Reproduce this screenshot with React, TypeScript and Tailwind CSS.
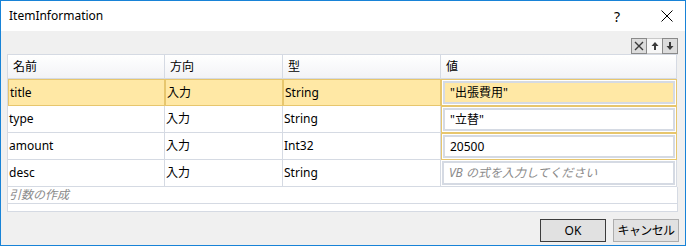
import React from "react";

const font = {
  fontFamily: '"Noto Sans", "Noto Sans CJK JP", sans-serif',
};

type Row = {
  name: string;
  dir: string;
  type: string;
  value: string;
  placeholder?: boolean;
  selected?: boolean;
  filled?: boolean;
};

const rows: Row[] = [
  { name: "title", dir: "入力", type: "String", value: "\"出張費用\"", selected: true, filled: true },
  { name: "type", dir: "入力", type: "String", value: "\"立替\"", filled: true },
  { name: "amount", dir: "入力", type: "Int32", value: "20500", filled: true },
  { name: "desc", dir: "入力", type: "String", value: "VB の式を入力してください", placeholder: true },
];

function ToolButtons() {
  return (
    <div className="flex justify-end pr-[1px]">
      <div className="w-[16px] h-[16px] border border-[#8a8a8a] bg-[#dcdcdc] flex items-center justify-center">
        <svg width="10" height="10" viewBox="0 0 10 10">
          <path d="M1 1 L9 9 M9 1 L1 9" stroke="#3a3a3a" strokeWidth="1.4" />
        </svg>
      </div>
      <div className="w-[15px] h-[16px] border-y border-[#c8c8c8] bg-[#f7f7f7] flex items-center justify-center">
        <svg width="8" height="10" viewBox="0 0 8 10">
          <path d="M4 1 L7.5 5 L5 5 L5 9 L3 9 L3 5 L0.5 5 Z" fill="#3a3a3a" />
        </svg>
      </div>
      <div className="w-[16px] h-[16px] border border-[#8a8a8a] bg-[#dcdcdc] flex items-center justify-center">
        <svg width="8" height="10" viewBox="0 0 8 10">
          <path d="M4 9 L7.5 5 L5 5 L5 1 L3 1 L3 5 L0.5 5 Z" fill="#3a3a3a" />
        </svg>
      </div>
    </div>
  );
}

function DataRow({ row }: { row: Row }) {
  const cell = row.selected
    ? "bg-[#ffe8a5] border border-[#e7c66d]"
    : "bg-white border-r border-b border-[#d5dae3]";
  return (
    <div className="grid grid-cols-[157px_118px_158px_236px] h-[27px]">
      <div className={`${cell} flex items-center pl-[1px]`}>{row.name}</div>
      <div className={`${cell} flex items-center pl-[1px]`}>{row.dir}</div>
      <div className={`${cell} flex items-center pl-[1px]`}>{row.type}</div>
      <div
        className={`${
          row.filled ? "border border-[#e7c66d]" : "border-r border-b border-[#d5dae3]"
        } bg-white p-[1px]`}
      >
        <div
          className={`h-full border-2 border-[#d5dae3] flex items-center pl-[5px] ${
            row.selected ? "bg-[#ffe8a5]" : "bg-white"
          } ${row.placeholder ? "italic text-[#8a8a8a]" : ""}`}
        >
          {row.value}
        </div>
      </div>
    </div>
  );
}

export default function App() {
  return (
    <div
      className="w-[686px] h-[246px] border border-[#1883d7] flex flex-col text-[12px] text-black overflow-hidden"
      style={font}
    >
      <div className="h-[30px] bg-white flex items-center pl-[8px] shrink-0">
        <span className="flex-1">ItemInformation</span>
        <span className="text-[14px] w-[10px] mr-[37px]">?</span>
        <svg width="12" height="12" viewBox="0 0 12 12" className="mr-[12px]">
          <path d="M0.5 0.5 L11.5 11.5 M11.5 0.5 L0.5 11.5" stroke="#000" strokeWidth="1" />
        </svg>
      </div>
      <div className="flex-1 bg-[#f0f0f0] flex flex-col px-[6px] pt-[7px]">
        <ToolButtons />
        <div className="w-[671px] border-l border-t border-[#d5dae3]">
          <div className="grid grid-cols-[157px_118px_158px_236px] h-[24px]">
            {["名前", "方向", "型", "値"].map((h) => (
              <div
                key={h}
                className="border-r border-b border-[#d5dae3] bg-gradient-to-b from-white to-[#f2f3f6] flex items-center pl-[5px]"
              >
                {h}
              </div>
            ))}
          </div>
          {rows.map((r) => (
            <DataRow key={r.name} row={r} />
          ))}
          <div className="h-[17px] bg-white border-r border-b border-[#d5dae3] flex items-center pl-[1px] italic text-[#8a8a8a]">
            引数の作成
          </div>
          <div className="h-[8px] bg-white border-r border-b border-[#d5dae3]" />
        </div>
        <div className="flex justify-end gap-[7px] mt-[7px] pr-[0px]">
          <button className="w-[66px] h-[23px] bg-[#e1e1e1] border border-[#3c3c3c] text-[12px]">
            OK
          </button>
          <button className="w-[66px] h-[23px] bg-[#e1e1e1] border border-[#adadad] text-[12px] tracking-[-0.6px]">
            キャンセル
          </button>
        </div>
      </div>
    </div>
  );
}
